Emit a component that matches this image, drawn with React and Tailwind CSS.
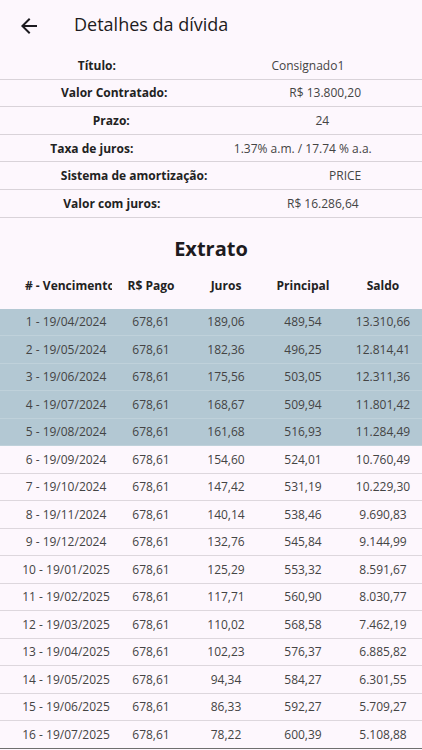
import React from 'react';

const info = [
  ['Título:', 'Consignado1'],
  ['Valor Contratado:', 'R$ 13.800,20'],
  ['Prazo:', '24'],
  ['Taxa de juros:', '1.37% a.m. / 17.74 % a.a.'],
  ['Sistema de amortização:', 'PRICE'],
  ['Valor com juros:', 'R$ 16.286,64'],
];

const rows = [
  ['1 - 19/04/2024', '678,61', '189,06', '489,54', '13.310,66'],
  ['2 - 19/05/2024', '678,61', '182,36', '496,25', '12.814,41'],
  ['3 - 19/06/2024', '678,61', '175,56', '503,05', '12.311,36'],
  ['4 - 19/07/2024', '678,61', '168,67', '509,94', '11.801,42'],
  ['5 - 19/08/2024', '678,61', '161,68', '516,93', '11.284,49'],
  ['6 - 19/09/2024', '678,61', '154,60', '524,01', '10.760,49'],
  ['7 - 19/10/2024', '678,61', '147,42', '531,19', '10.229,30'],
  ['8 - 19/11/2024', '678,61', '140,14', '538,46', '9.690,83'],
  ['9 - 19/12/2024', '678,61', '132,76', '545,84', '9.144,99'],
  ['10 - 19/01/2025', '678,61', '125,29', '553,32', '8.591,67'],
  ['11 - 19/02/2025', '678,61', '117,71', '560,90', '8.030,77'],
  ['12 - 19/03/2025', '678,61', '110,02', '568,58', '7.462,19'],
  ['13 - 19/04/2025', '678,61', '102,23', '576,37', '6.885,82'],
  ['14 - 19/05/2025', '678,61', '94,34', '584,27', '6.301,55'],
  ['15 - 19/06/2025', '678,61', '86,33', '592,27', '5.709,27'],
  ['16 - 19/07/2025', '678,61', '78,22', '600,39', '5.108,88'],
];

function Cells({ values, bold }) {
  return (
    <>
      <div className={`w-[92px] shrink-0 overflow-hidden whitespace-nowrap ${bold ? 'text-left pl-[5px]' : 'text-center'}`}>{values[0]}</div>
      <div className="w-[78px] shrink-0 text-center whitespace-nowrap">{values[1]}</div>
      <div className="w-[72px] shrink-0 text-center whitespace-nowrap">{values[2]}</div>
      <div className="w-[82px] shrink-0 text-center whitespace-nowrap">{values[3]}</div>
      <div className="w-[78px] shrink-0 text-center whitespace-nowrap">{values[4]}</div>
    </>
  );
}

export default function App() {
  return (
    <div className="w-[422px] h-[750px] overflow-hidden bg-[#fdf7fd] font-['Open_Sans',sans-serif]">
      {/* App bar */}
      <div className="h-[52px] flex items-center">
        <button className="w-[58px] h-[48px] flex items-center justify-center text-[#1d1b20]">
          <svg width="24" height="24" viewBox="0 0 24 24" fill="currentColor">
            <path d="M20 11H7.83l5.59-5.59L12 4l-8 8 8 8 1.41-1.41L7.83 13H20v-2z" />
          </svg>
        </button>
        <h1 className="ml-[16px] -mt-[3px] text-[18px] text-[#1d1b20]">Detalhes da dívida</h1>
      </div>

      {/* Info rows */}
      {info.map(([label, value]) => (
        <div key={label} className="h-[27.6px] flex items-center justify-around border-b border-[#d9d3d9] text-[12px] pt-px">
          <span className="font-bold text-[#222]">{label}</span>
          <span className="text-[#444]">{value}</span>
        </div>
      ))}

      {/* Extrato */}
      <h2 className="mt-[17px] h-[28px] leading-[28px] text-center text-[20px] font-bold text-[#1d1b20]">Extrato</h2>

      <div className="h-[46px] flex items-center pl-[20px] text-[12px] font-bold text-[#222]">
        <Cells values={['# - Vencimento', 'R$ Pago', 'Juros', 'Principal', 'Saldo']} bold />
      </div>

      {rows.map((r, i) => (
        <div
          key={r[0]}
          className={`h-[27.5px] flex items-center pl-[20px] pt-px text-[12px] text-[#444] border-b ${
            i < 5 ? 'bg-[#b3c8d3] border-[#bfd1da]' : i === rows.length - 1 ? 'border-[#6f6f6f]' : 'border-[#ddd7dd]'
          }`}
        >
          <Cells values={r} />
        </div>
      ))}
    </div>
  );
}
